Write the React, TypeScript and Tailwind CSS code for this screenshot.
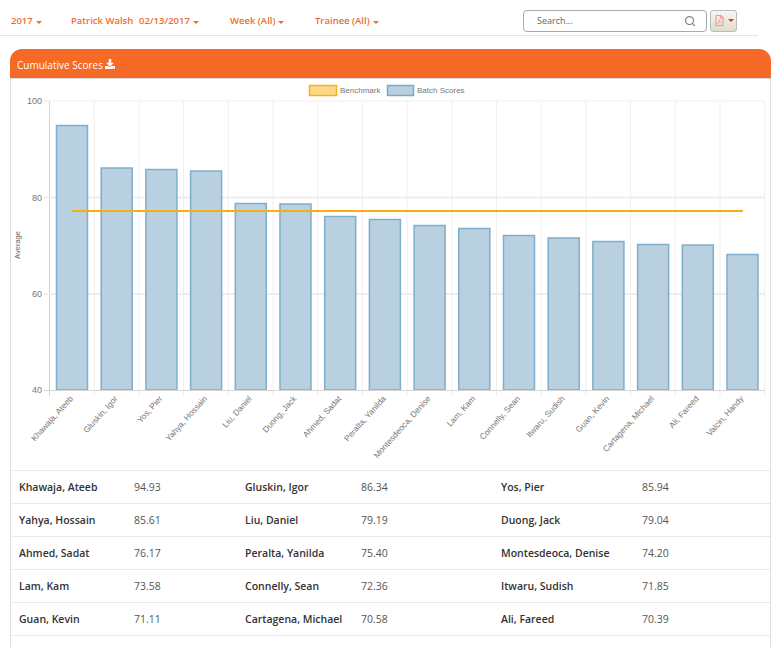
import { Search } from 'lucide-react';
import { FaDownload, FaRegFilePdf } from 'react-icons/fa';

// top = pixel top of the bar as drawn by the chart
const scores = [
  { name: 'Khawaja, Ateeb', score: 94.93, top: 125.5 },
  { name: 'Gluskin, Igor', score: 86.34, top: 168 },
  { name: 'Yos, Pier', score: 85.94, top: 169.5 },
  { name: 'Yahya, Hossain', score: 85.61, top: 171 },
  { name: 'Liu, Daniel', score: 79.19, top: 203.5 },
  { name: 'Duong, Jack', score: 79.04, top: 204 },
  { name: 'Ahmed, Sadat', score: 76.17, top: 216.5 },
  { name: 'Peralta, Yanilda', score: 75.4, top: 219.5 },
  { name: 'Montesdeoca, Denise', score: 74.2, top: 225.5 },
  { name: 'Lam, Kam', score: 73.58, top: 228.5 },
  { name: 'Connelly, Sean', score: 72.36, top: 235.5 },
  { name: 'Itwaru, Sudish', score: 71.85, top: 238 },
  { name: 'Guan, Kevin', score: 71.11, top: 241.5 },
  { name: 'Cartagena, Michael', score: 70.58, top: 244.5 },
  { name: 'Ali, Fareed', score: 70.39, top: 245 },
  { name: 'Valcin, Handy', score: 68.3, top: 254.5 },
];

const left = 49.5;
const step = 44.7;
const yTicks = [
  { label: 100, y: 101 },
  { label: 80, y: 197.5 },
  { label: 60, y: 294 },
  { label: 40, y: 390 },
];

function Caret({ className = 'border-t-[#f26b2a]' }: { className?: string }) {
  return <span className={`ml-[3px] inline-block h-0 w-0 border-x-[3px] border-t-[3px] border-x-transparent ${className}`} />;
}

function Chart() {
  return (
    <svg viewBox="11 79 759 391" className="block h-[391px] w-[759px]" fontFamily="'Liberation Sans', sans-serif">
      <rect x="309.5" y="85.5" width="27" height="10" fill="#fdd88a" stroke="#fbb117" strokeWidth="1.5" />
      <text x="340" y="93" fontSize="8" fill="#777">Benchmark</text>
      <rect x="387.5" y="85.5" width="26" height="10" fill="#b8d0e0" stroke="#7aaac8" strokeWidth="1.5" />
      <text x="417" y="93" fontSize="8" fill="#777">Batch Scores</text>

      {scores.map((_, i) => (
        <line key={i} x1={left + step * (i + 1)} x2={left + step * (i + 1)} y1="101" y2="396" stroke="#eeeeee" />
      ))}
      <line x1={left} x2={left} y1="101" y2="396" stroke="#d6d6d6" />
      <line x1="44" x2="765" y1="101" y2="101" stroke="#eeeeee" />
      <line x1="44" x2="765" y1="197.5" y2="197.5" stroke="#eeeeee" strokeWidth="2" />
      <line x1="44" x2="765" y1="294" y2="294" stroke="#eeeeee" strokeWidth="2" />

      {yTicks.map((t) => (
        <text key={t.label} x="42" y={t.y + 3} fontSize="9" fill="#777" textAnchor="end">{t.label}</text>
      ))}
      <text transform="translate(20 245) rotate(-90)" fontSize="7.5" fill="#666" textAnchor="middle">Average</text>

      {scores.map((s, i) => (
        <rect
          key={s.name}
          x={left + step * i + 7}
          y={s.top}
          width="31"
          height={390 - s.top}
          fill="#b8d0e0"
          stroke="#7fadca"
          strokeWidth="1.5"
        />
      ))}
      <line x1="44" x2="765" y1="390.5" y2="390.5" stroke="#d6d6d6" />
      <line x1="72" x2="743" y1="211" y2="211" stroke="#f8ae12" strokeWidth="2" />

      {scores.map((s, i) => (
        <text
          key={s.name}
          transform={`translate(${left + step * i + 24} 399) rotate(-48)`}
          fontSize="8.3"
          fill="#777"
          textAnchor="end"
        >
          {s.name}
        </text>
      ))}
    </svg>
  );
}

export default function App() {
  const rows = [0, 3, 6, 9, 12].map((i) => scores.slice(i, i + 3));

  return (
    <div className="h-[647px] w-[783px] overflow-hidden bg-white font-['Open_Sans',sans-serif]">
      <div className="flex h-9 w-[758px] items-center whitespace-nowrap border-b border-[#e6e6e6] text-[9.5px] font-semibold text-[#f26b2a]">
        <span className="ml-[11px] mt-[7px] w-[60px]">2017<Caret /></span>
        <span className="mt-[7px] w-[68px]">Patrick Walsh</span>
        <span className="mt-[7px] w-[91px]">02/13/2017<Caret /></span>
        <span className="mt-[7px] w-[85px]">Week (All)<Caret /></span>
        <span className="mt-[7px] w-[208px]">Trainee (All)<Caret /></span>
        <div className="mt-[6px] flex h-[22px] w-[184px] items-center justify-between rounded-[4px] border border-[#aaaaaa] pl-[13px] pr-[10px] text-[9px] font-normal text-[#666]">
          <span>Search...</span>
          <Search size={12} strokeWidth={2.5} className="text-[#888]" />
        </div>
        <div className="ml-[3px] mt-[6px] flex h-[22px] w-[27px] items-center justify-center rounded-[3px] border border-[#bbbbbb] bg-gradient-to-b from-[#f6f6f2] to-[#dedccc]">
          <FaRegFilePdf size={11} className="text-[#f79090]" />
          <Caret className="border-t-[#f03030]" />
        </div>
      </div>

      <div className="ml-[10px] mt-[13px] w-[761px]">
        <div className="flex h-[29px] items-center gap-0.5 rounded-t-[12px] bg-[#f46a26] pl-[7px] pt-[3px] text-[10px] text-white">
          Cumulative Scores <FaDownload size={10} className="mb-[2px]" />
        </div>
        <div className="border-x border-t border-[#dddddd]">
          <Chart />
          {rows.map((row) => (
            <div
              key={row[0].name}
              className="grid h-[33px] grid-cols-[115px_111px_116px_140px_141px_1fr] items-center border-t border-[#e8e8ee] pl-2 pt-[2px] text-[10.5px]"
            >
              {row.map((s) => [
                <span key={s.name} className="font-semibold text-[#333]">{s.name}</span>,
                <span key={s.name + '-score'} className="text-[#555]">{s.score.toFixed(2)}</span>,
              ])}
            </div>
          ))}
          <div className="h-4 border-t border-[#e8e8ee]" />
        </div>
      </div>
    </div>
  );
}
